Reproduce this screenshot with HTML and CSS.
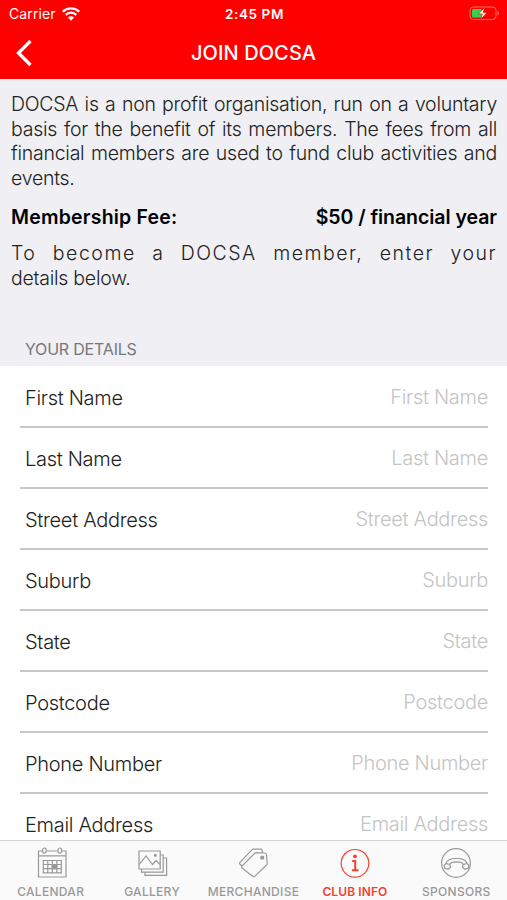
FILE: index.html
```html
<!DOCTYPE html>
<html lang="en">
<head>
    <meta charset="UTF-8">
    <meta name="viewport" content="width=device-width, initial-scale=1.0">
    <title>Join DOCSA</title>
    <link rel="stylesheet" href="styles.css">
</head>
<body>
    <header>
        <div class="status-bar">
            <div class="carrier">
                <span>Carrier</span>
                <svg width="18" height="14" viewBox="0 0 18 14" fill="none" stroke="#fff" stroke-width="2.3">
                    <path d="M.8 4.8a11.7 11.7 0 0 1 16.4 0M3.7 7.9a7.5 7.5 0 0 1 10.6 0"/>
                    <path d="M9 13.7 5.9 10.5a4.4 4.4 0 0 1 6.2 0z" fill="#fff" stroke="none"/>
                </svg>
            </div>
            <span class="time">2:45 PM</span>
            <svg class="battery" width="31" height="15" viewBox="0 0 31 15">
                <rect x="1" y="1" width="26" height="12.6" rx="3.5" fill="none" stroke="#ff6b60" stroke-width="1"/>
                <path d="M28.5 5v4.6q1.5-.6 1.5-2.3t-1.5-2.3z" fill="#ff6b60"/>
                <rect x="3" y="3" width="10" height="8.6" rx="1.5" fill="#35d04f"/>
                <path d="M15.8 1.5 9.3 8h4l-1.8 5.2L18.2 6.6h-4z" fill="#fff" stroke="#f00" stroke-width=".7"/>
            </svg>
        </div>
        <div class="nav-bar">
            <svg class="back" width="18" height="28" viewBox="0 0 18 28" fill="none" stroke="#fff" stroke-width="3.3">
                <path d="M15.5 2 3.5 14l12 12"/>
            </svg>
            <h1>JOIN DOCSA</h1>
        </div>
    </header>

    <main>
        <section class="intro">
            <p>DOCSA is a non profit organisation, run on a voluntary basis for the benefit of its members. The fees from all financial members are used to fund club activities and events.</p>
            <div class="fee">
                <strong>Membership Fee:</strong>
                <strong class="amount">$50 / financial year</strong>
            </div>
            <p><span class="wide">To become a DOCSA member, enter your</span> details below.</p>
        </section>
        <h2>YOUR DETAILS</h2>
        <form>
            <div class="row"><label for="firstName">First Name</label><input id="firstName" type="text" placeholder="First Name"></div>
            <div class="row"><label for="lastName">Last Name</label><input id="lastName" type="text" placeholder="Last Name"></div>
            <div class="row"><label for="street">Street Address</label><input id="street" type="text" placeholder="Street Address"></div>
            <div class="row"><label for="suburb">Suburb</label><input id="suburb" type="text" placeholder="Suburb"></div>
            <div class="row"><label for="state">State</label><input id="state" type="text" placeholder="State"></div>
            <div class="row"><label for="postcode">Postcode</label><input id="postcode" type="text" placeholder="Postcode"></div>
            <div class="row"><label for="phone">Phone Number</label><input id="phone" type="tel" placeholder="Phone Number"></div>
            <div class="row"><label for="email">Email Address</label><input id="email" type="email" placeholder="Email Address"></div>
        </form>
    </main>

    <nav class="tabs">
        <div class="tab">
            <svg width="32" height="32" viewBox="0 0 32 32">
                <path d="M7.3 4H3.5v26H31V4h-4M11.5 4h11M3.500 8.800H31"/>
                <ellipse cx="9.400" cy="3.600" rx="1.900" ry="2.600"/>
                <ellipse cx="24.800" cy="3.600" rx="1.900" ry="2.600"/>
                <path d="M8.300 13.500h18v12.300h-18zM8.300 17.500h18M8.300 21.700h18M12.800 13.500v12.300M17.300 13.500v12.300M21.800 13.500v12.300"/>
                <path d="M17.300 17.500h4.500v4.200h-4.500z" fill="currentColor"/>
            </svg>
            <span>CALENDAR</span>
        </div>
        <div class="tab">
            <svg width="32" height="32" viewBox="0 0 32 32">
                <path d="M3 4h21.200v18H3zM5.500 22v3.200h21.700V8h-3M9 25.200v3.100h21.600V11h-3.400"/>
                <path d="M3.200 17.500 10 9l6.500 8.500 3.500-4 4 4"/>
                <circle cx="19.300" cy="8.300" r=".9" fill="currentColor"/>
            </svg>
            <span>GALLERY</span>
        </div>
        <div class="tab">
            <svg width="32" height="32" viewBox="0 0 32 32">
                <path d="M19.300 5.600 27.500 6q1.800.1 2 2l.7 8.500q0 .9-.6 1.500L17.700 29.400q-.9.800-1.800 0L5 21.100q-.9-.9 0-1.900L18 6q.5-.4 1.300-.4z"/>
                <path d="M25.800 5.700 24.900 3q-.3-.9-1.300-.9l-7.300.1q-.8 0-1.400.6L3 15.300q-.9 1 0 1.900l2.300 1.800"/>
                <circle cx="25.200" cy="10.700" r="1.500" fill="currentColor"/>
            </svg>
            <span>MERCHANDISE</span>
        </div>
        <div class="tab active">
            <svg width="32" height="32" viewBox="0 0 32 32">
                <circle cx="16" cy="16.300" r="13.800"/>
                <circle cx="16" cy="9.300" r="1.900" fill="currentColor" stroke="none"/>
                <path d="M13.200 14h3v9M12.900 23.200h6.600" stroke-width="2"/>
            </svg>
            <span>CLUB INFO</span>
        </div>
        <div class="tab">
            <svg width="32" height="32" viewBox="0 0 32 32">
                <circle cx="16" cy="16" r="14.400"/>
                <path d="M6 16.500C7 12.500 11 11.500 16.500 11.500s9.500 1 10.500 5M10 17.500c.2-2 2.500-2.600 6.500-2.600s6.300.6 6.500 2.600"/>
                <path d="M6 16.500 9.700 17.500 10.600 20.300 8 22.300 4.700 21 4.200 18.200zM27 16.500 23.300 17.500 22.400 20.300 25 22.300 28.300 21 28.800 18.200z"/>
            </svg>
            <span>SPONSORS</span>
        </div>
    </nav>
</body>
</html>
```
FILE: styles.css
```css
* {
    box-sizing: border-box;
}
body {
    display: flex;
    flex-direction: column;
    height: 900px;
    margin: 0;
    overflow: hidden;
    background-color: #fff;
    font-family: Inter, "Liberation Sans", sans-serif;
}
header {
    height: 79px;
    flex: none;
    background-color: #f00;
    color: #fff;
}
.status-bar {
    display: grid;
    grid-template-columns: 1fr auto 1fr;
    align-items: center;
    height: 27px;
    padding: 0 7px 0 9px;
    font-size: 14px;
}
.carrier {
    display: flex;
    align-items: center;
    gap: 6px;
    letter-spacing: 0.1px;
}
.time {
    font-weight: 600;
    font-size: 13.5px;
    letter-spacing: 0.6px;
}
.battery {
    justify-self: end;
}
.nav-bar {
    display: grid;
    grid-template-columns: 60px 1fr 60px;
    align-items: center;
    height: 51px;
}
.back {
    margin-left: 15px;
}
h1 {
    margin: 0;
    text-align: center;
    font-size: 20px;
    font-weight: 500;
    letter-spacing: 0.1px;
}
main {
    flex: 1;
    min-height: 0;
    overflow: hidden;
}
.intro {
    height: 253px;
    padding: 13px 10px 0 11px;
    background-color: #efeff4;
    color: #222;
    font-size: 19.5px;
    font-weight: 300;
    line-height: 24.5px;
    letter-spacing: -0.25px;
}
.intro p {
    margin: 0;
    text-align: justify;
}
.fee {
    display: flex;
    justify-content: space-between;
    margin: 15px 0 11.5px;
    color: #000;
    letter-spacing: 0.2px;
}
.fee strong {
    font-weight: 600;
}
.fee .amount {
    letter-spacing: -0.05px;
}
.wide {
    letter-spacing: 1.5px;
}
h2 {
    height: 34px;
    margin: 0;
    padding: 7px 25px 0;
    background-color: #efeff4;
    color: #77777c;
    font-size: 16px;
    font-weight: 400;
    line-height: 20px;
    letter-spacing: -0.2px;
}
form {
    padding: 0 19px 0 20px;
}
.row {
    display: flex;
    align-items: center;
    justify-content: space-between;
    height: 61px;
    padding-left: 5px;
    border-bottom: 2px solid #c8c8c8;
    color: #222;
    font-size: 20px;
    font-weight: 300;
    letter-spacing: -0.3px;
}
.row:first-child {
    height: 62px;
    padding-top: 1px;
}
.row label {
    padding-top: 2px;
}
.row input {
    width: 220px;
    padding: 0;
    border: none;
    outline: none;
    background: none;
    text-align: right;
    font: inherit;
    letter-spacing: inherit;
}
.row input::placeholder {
    color: #c4c4c4;
}
.tabs {
    display: grid;
    grid-template-columns: repeat(5, 1fr);
    flex: none;
    height: 60px;
    border-top: 1px solid #d5d5d5;
    background-color: #fafafa;
    color: #999;
}
.tab {
    display: flex;
    flex-direction: column;
    align-items: center;
    padding-top: 6px;
    font-size: 12px;
    font-weight: 500;
    line-height: 15px;
    letter-spacing: 0.3px;
}
.tab span {
    margin-top: 5px;
}
.tab svg {
    fill: none;
    stroke: currentColor;
    stroke-width: 1.2;
}
.tab.active {
    color: #f4402c;
    font-weight: 600;
    letter-spacing: 0.1px;
}
```
